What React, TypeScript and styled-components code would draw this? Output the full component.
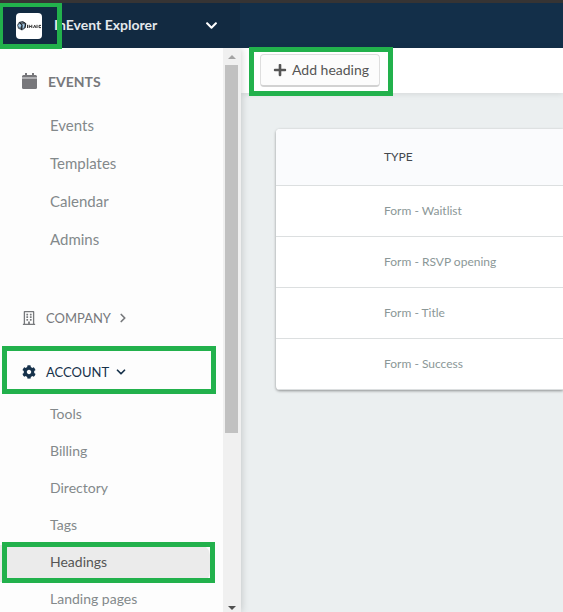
import React from "react";
import styled, { createGlobalStyle, css } from "styled-components";
import { FaChevronDown, FaCog, FaPlus, FaRegBuilding } from "react-icons/fa";
import { FiChevronDown, FiChevronRight } from "react-icons/fi";

const GlobalStyle = createGlobalStyle`
  * { box-sizing: border-box; }
  body { margin: 0; font-family: Lato, "Open Sans", sans-serif; background: #ebeff0; }
  button { font-family: inherit; cursor: pointer; }
  ul { list-style: none; margin: 0; padding: 0; }
`;

const Page = styled.div`
  height: 100vh;
  display: flex;
  flex-direction: column;
  overflow: hidden;
  border-top: 3px solid #363434;
`;

const TopBar = styled.header`
  flex: 0 0 45px;
  display: flex;
  background: #132f49;
`;

const AccountSwitch = styled.button`
  width: 240px;
  display: flex;
  align-items: center;
  gap: 12px;
  padding: 0 22px 2px 16px;
  border: 0;
  background: #122a41;
  color: #e4e8ec;
  font-size: 14px;
  font-weight: 700;
  text-align: left;
  position: relative;

  > svg {
    flex: none;
    margin-top: 2px;
  }
`;

const AccountName = styled.span`
  flex: 1;
`;

const Body = styled.div`
  flex: 1;
  min-height: 0;
  display: flex;
`;

const Sidebar = styled.aside`
  flex: 0 0 241px;
  display: flex;
  min-height: 0;
  background: #fdfdfd;
  box-shadow: 0 0 8px rgba(0, 0, 0, 0.2);
  clip-path: inset(0 -12px 0 0);
  z-index: 1;
`;

const Nav = styled.nav`
  flex: 1;
  overflow: hidden;
`;

const Section = styled.section<{ $gap?: number }>`
  margin-bottom: ${(p) => p.$gap ?? 0}px;
`;

const SectionButton = styled.button<{ $tone: "bold" | "muted" | "open" }>`
  position: relative;
  width: 100%;
  display: flex;
  align-items: center;
  gap: 5px;
  height: ${(p) => (p.$tone === "bold" ? 58 : p.$tone === "open" ? 49 : 48)}px;
  padding: ${(p) => (p.$tone === "bold" ? "8px 0 0 22px" : p.$tone === "open" ? "0 0 2px 22px" : "0 0 0 22px")};
  border: 0;
  background: none;
  font-size: ${(p) => (p.$tone === "bold" ? 14 : 13)}px;
  font-weight: ${(p) => (p.$tone === "bold" ? 700 : 400)};
  color: ${(p) => (p.$tone === "open" ? "#17324b" : "#77797c")};

  > svg:first-child {
    flex: none;
    margin-right: ${(p) => (p.$tone === "bold" ? 6 : 5)}px;
  }
`;

const NavLink = styled.a<{ $compact?: boolean; $active?: boolean }>`
  position: relative;
  display: flex;
  align-items: center;
  height: ${(p) => (p.$compact ? 37 : 38)}px;
  margin-right: 13px;
  padding: 0 0 ${(p) => (p.$compact ? 4 : 1)}px 50px;
  font-size: ${(p) => (p.$compact ? 14 : 15)}px;
  color: #83898b;
  text-decoration: none;
  ${(p) =>
    p.$active &&
    css`
      color: #555;
      background: #ebebeb;
      border-radius: 0 10px 10px 0;
    `}
`;

const ScrollTrack = styled.div`
  flex: 0 0 18px;
  display: flex;
  flex-direction: column;
  align-items: center;
  padding: 7px 1px 0 0;
  background: #f0f0f0;
`;

const ScrollThumb = styled.div`
  width: 13px;
  height: 368px;
  margin-top: 6px;
  background: #c1c1c1;
`;

const Arrow = styled.span<{ $down?: boolean }>`
  border: 4px solid transparent;
  ${(p) =>
    p.$down
      ? css`
          margin: auto 0 2px;
          border-top-color: #505050;
          border-bottom: 0;
        `
      : css`
          border-bottom-color: #a3a3a3;
          border-top: 0;
        `}
`;

const Main = styled.main`
  flex: 1;
  min-width: 0;
  background: #ebeff0;
`;

const Toolbar = styled.div`
  height: 45px;
  padding: 6px 0 0 19px;
  background: #fff;
  box-shadow: 0 1px 6px rgba(0, 0, 0, 0.1);
`;

const AddButton = styled.button`
  position: relative;
  display: flex;
  align-items: center;
  gap: 5px;
  height: 33px;
  padding: 0 10px 1px 12px;
  border: 1px solid #dedede;
  border-bottom: 2px solid #d2d2d2;
  border-radius: 4px;
  background: #fcfcfc;
  color: #555;
  font-size: 14px;
`;

const Marker = styled.span<{ $inset: string }>`
  position: absolute;
  inset: ${(p) => p.$inset};
  border: 5px solid #22b14c;
  pointer-events: none;
  z-index: 2;
`;

const Card = styled.div`
  margin: 36px 0 0 35px;
  background: #fff;
  border-radius: 4px 0 0 4px;
  overflow: hidden;
  box-shadow: 0 1px 3px rgba(0, 0, 0, 0.4);
`;

const Table = styled.table`
  width: 100%;
  border-spacing: 0;
  table-layout: fixed;
`;

const HeadCell = styled.th<{ $lead?: boolean }>`
  width: ${(p) => (p.$lead ? "108px" : "auto")};
  height: 57px;
  padding: 0 0 2px;
  background: #fafbfd;
  border-bottom: 1px solid #dcdfe0;
  color: #43484d;
  font-size: 12px;
  font-weight: 400;
  text-align: left;
`;

const Cell = styled.td`
  height: 51px;
  padding: 0 0 2px;
  border-bottom: 1px solid #dcdfe0;
  color: #8b9797;
  font-size: 12px;
`;

const eventLinks = ["Events", "Templates", "Calendar", "Admins"];
const accountLinks = ["Tools", "Billing", "Directory", "Tags", "Headings", "Landing pages"];
const headings = ["Form - Waitlist", "Form - RSVP opening", "Form - Title", "Form - Success"];

const CalendarIcon = () => (
  <svg width="15" height="16" viewBox="0 0 15 16" aria-hidden="true">
    <path d="M3 0h2v2h5V0h2v2h1.5A1.5 1.5 0 0 1 15 3.5V5H0V3.5A1.5 1.5 0 0 1 1.5 2H3z" fill="#77777b" />
    <path d="M0 4h15v2H0z" fill="#b0b0b3" />
    <path d="M0 6h15v8.500a1.500 1.500 0 0 1-1.500 1.500h-12A1.500 1.500 0 0 1 0 14.500z" fill="#77777b" />
  </svg>
);

const CompanyLogo = () => (
  <svg width="26" height="26" viewBox="0 0 26 26" aria-hidden="true">
    <rect width="26" height="26" rx="4" fill="#fff" />
    <path d="M1 12 3 9l3-1 4 2.500-1 5L6 17.500 2 15.500z" fill="#55626d" />
    <path d="m2 12.500 2-2 1.500 1.500L4 15zM6.500 11l2.200.5-.7 3-1.500.8z" fill="#a5cdea" />
    <path d="M3.500 9 6 12.500 5.500 17M6.500 8.500 9.800 10.500 9 15" fill="none" stroke="#15191d" strokeWidth="1" />
    <path d="M11.500 11.800v3.200M13.200 11.800v3.200M13.200 13.400h2.300M15.800 11.800v3.200M17.500 15l1.200-2.800 1.300 2.800M21 11.800v3.200M25 12.400h-2v2.200h2" fill="none" stroke="#333" strokeWidth="1" />
  </svg>
);

export default function App() {
  return (
    <>
      <GlobalStyle />
      <Page>
        <TopBar>
          <AccountSwitch type="button">
            <CompanyLogo />
            <AccountName>InEvent Explorer</AccountName>
            <FaChevronDown size={13} color="#fff" />
            <Marker $inset="-1px 178px -1px -2px" />
          </AccountSwitch>
        </TopBar>
        <Body>
          <Sidebar>
            <Nav>
              <Section $gap={36}>
                <SectionButton type="button" $tone="bold">
                  <CalendarIcon />
                  EVENTS
                </SectionButton>
                <ul>
                  {eventLinks.map((label) => (
                    <li key={label}>
                      <NavLink href="#">{label}</NavLink>
                    </li>
                  ))}
                </ul>
              </Section>
              <Section $gap={6}>
                <SectionButton type="button" $tone="muted">
                  <FaRegBuilding size={14} />
                  COMPANY
                  <FiChevronRight size={14} strokeWidth={3} />
                </SectionButton>
              </Section>
              <Section>
                <SectionButton type="button" $tone="open">
                  <FaCog size={14} />
                  ACCOUNT
                  <FiChevronDown size={14} strokeWidth={3} />
                  <Marker $inset="-2px 7px 3px 2px" />
                </SectionButton>
                <ul>
                  {accountLinks.map((label) => (
                    <li key={label}>
                      <NavLink href="#" $compact $active={label === "Headings"}>
                        {label}
                        {label === "Headings" && <Marker $inset="-3px -5px -1px 2px" />}
                      </NavLink>
                    </li>
                  ))}
                </ul>
              </Section>
            </Nav>
            <ScrollTrack>
              <Arrow />
              <ScrollThumb />
              <Arrow $down />
            </ScrollTrack>
          </Sidebar>
          <Main>
            <Toolbar>
              <AddButton type="button">
                <FaPlus size={14} />
                Add heading
                <Marker $inset="-8px -14px -11px -12px" />
              </AddButton>
            </Toolbar>
            <Card>
              <Table>
                <thead>
                  <tr>
                    <HeadCell $lead />
                    <HeadCell scope="col">TYPE</HeadCell>
                  </tr>
                </thead>
                <tbody>
                  {headings.map((name) => (
                    <tr key={name}>
                      <Cell />
                      <Cell>{name}</Cell>
                    </tr>
                  ))}
                </tbody>
              </Table>
            </Card>
          </Main>
        </Body>
      </Page>
    </>
  );
}
